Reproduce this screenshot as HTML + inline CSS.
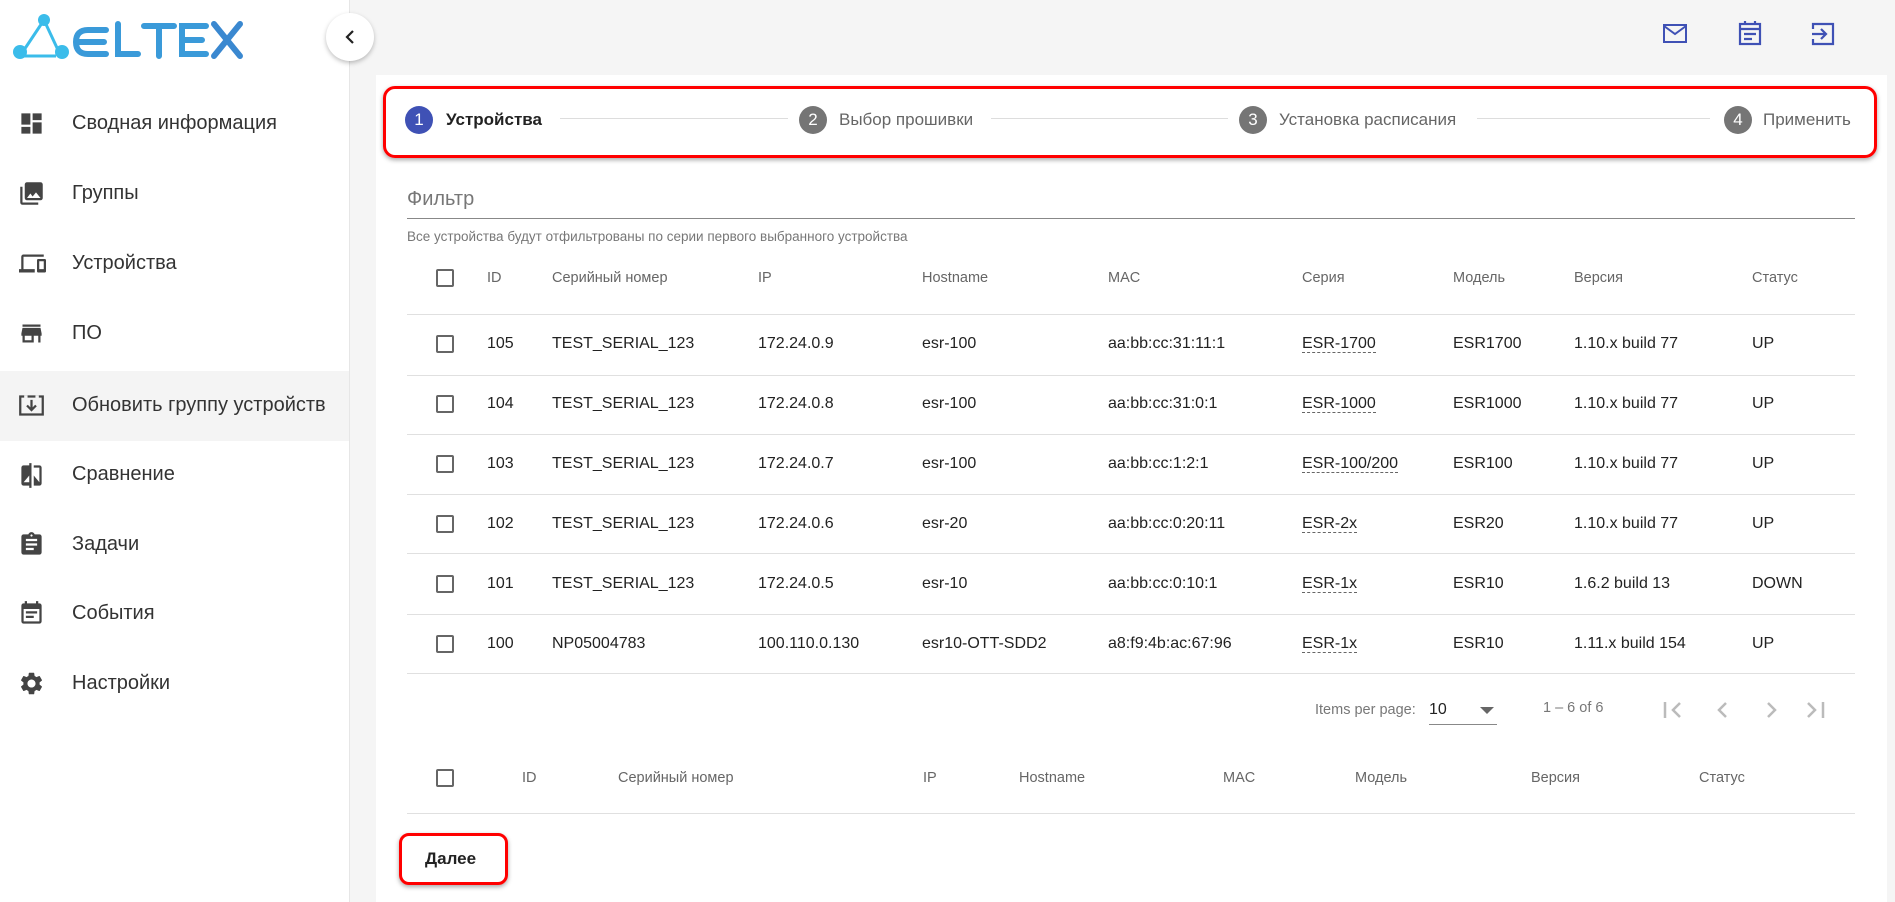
<!DOCTYPE html>
<html><head><meta charset="utf-8"><style>
*{margin:0;padding:0;box-sizing:border-box}
body{width:1895px;height:902px;overflow:hidden;background:#f5f5f5;font-family:"Liberation Sans",sans-serif;position:relative;color:#333}
.abs{position:absolute;white-space:nowrap}
#side{position:absolute;left:0;top:0;width:350px;height:902px;background:#fff;border-right:1px solid #e6e6e6}
.mi{position:absolute;left:0;width:349px;height:70px}
.mi svg{position:absolute;left:18px;top:21px}
.mi span{position:absolute;left:72px;top:23px;font-size:20px;color:#333}
#card{position:absolute;left:376px;top:75px;width:1511px;height:827px;background:#fff}
.n{font-family:"Liberation Sans Narrow","Liberation Sans",sans-serif}
.h{font-size:14.5px;color:#666}
.c{font-size:16px;color:#222}
.line{position:absolute;left:407px;width:1448px;height:1px;background:#e0e0e0}
.cb{position:absolute;left:436px;width:18px;height:18px;border:2px solid #666;border-radius:2px}
.ser{border-bottom:1px dashed #666}
.step{position:absolute;width:28px;height:28px;border-radius:50%;background:#757575;color:#fff;font-size:17px;text-align:center;line-height:28px}
.sl{position:absolute;height:1px;background:#ddd;top:118px}
</style></head><body>
<div id="side">
<svg class="abs" style="left:10px;top:12px" width="235" height="50" viewBox="0 0 235 50">
<g fill="#3bbcea"><circle cx="34" cy="8" r="6"/><circle cx="10" cy="40" r="7"/><circle cx="52" cy="40" r="7"/></g>
<g stroke="#3bbcea" stroke-width="3" fill="none"><path d="M34 8 L14 38 M34 8 L48 38 M14 44 H46"/></g>
<g stroke="#3a9ad9" stroke-width="6" fill="none" stroke-linecap="round"><path d="M96 18 H78 Q66 18 66 30 Q66 42 78 42 H96 M68 30 H94"/><path d="M108 12 V42 H128"/><path d="M134 14 H164 M149 14 V44"/><path d="M196 14 H172 V42 H196 M172 28 H192"/></g>
<path d="M204 12 L230 44 M230 12 L204 44" stroke="#3a88d0" stroke-width="6" stroke-linecap="round" fill="none"/>
</svg>
<div class="mi" style="top:89px"><svg width="27" height="27" viewBox="0 0 24 24" fill="#444"><path d="M3 13h8V3H3v10zm0 8h8v-6H3v6zm10 0h8V11h-8v10zm0-18v6h8V3h-8z"/></svg><span>Сводная информация</span></div>
<div class="mi" style="top:159px"><svg width="27" height="27" viewBox="0 0 24 24" fill="#444"><path d="M22 16V4c0-1.1-.9-2-2-2H8c-1.1 0-2 .9-2 2v12c0 1.1.9 2 2 2h12c1.1 0 2-.9 2-2zm-11-4l2 2.7L16 11l4 5H8l3-4zM2 6v14c0 1.1.9 2 2 2h14v-2H4V6H2z"/></svg><span>Группы</span></div>
<div class="mi" style="top:229px"><svg width="29" height="27" viewBox="0 0 24 24" fill="#444"><path d="M4 6h18V4H4c-1.1 0-2 .9-2 2v11H0v3h14v-3H4V6zm19 2h-6c-.55 0-1 .45-1 1v10c0 .55.45 1 1 1h6c.55 0 1-.45 1-1V9c0-.55-.45-1-1-1zm-1 9h-4v-7h4v7z"/></svg><span>Устройства</span></div>
<div class="mi" style="top:299px"><svg width="27" height="27" viewBox="0 0 24 24" fill="#444"><path d="M20 4H4v2h16V4zm1 10v-2l-1-5H4l-1 5v2h1v6h10v-6h4v6h2v-6h1zm-9 4H6v-4h6v4z"/></svg><span>ПО</span></div>
<div class="mi" style="top:371px;background:#f4f4f4"><svg width="27" height="27" viewBox="0 0 24 24" fill="none" stroke="#444" stroke-width="2"><rect x="2" y="4" width="20" height="16"/><path d="M12 7v9M8 12l4 4 4-4"/><path d="M7 3v3M17 3v3" stroke="#f4f4f4" stroke-width="3"/></svg><span>Обновить группу устройств</span></div>
<div class="mi" style="top:440px"><svg width="27" height="29" viewBox="0 0 24 24" fill="#444"><path d="M10 3H5c-1.1 0-2 .9-2 2v14c0 1.1.9 2 2 2h5v2h2V1h-2v2zm0 15H5l5-6v6zm9-15h-5v2h5v13l-5-6v9h5c1.1 0 2-.9 2-2V5c0-1.1-.9-2-2-2z"/></svg><span>Сравнение</span></div>
<div class="mi" style="top:510px"><svg width="27" height="27" viewBox="0 0 24 24" fill="#444"><path d="M19 3h-4.18C14.4 1.84 13.3 1 12 1s-2.4.84-2.820 2H5c-1.1 0-2 .9-2 2v14c0 1.1.9 2 2 2h14c1.1 0 2-.9 2-2V5c0-1.1-.9-2-2-2zm-7 0c.55 0 1 .45 1 1s-.45 1-1 1-1-.45-1-1 .45-1 1-1zm2 14H7v-2h7v2zm3-4H7v-2h10v2zm0-4H7V7h10v2z"/></svg><span>Задачи</span></div>
<div class="mi" style="top:579px"><svg width="27" height="27" viewBox="0 0 24 24" fill="#444"><path d="M17 10H7v2h10v-2zm2-7h-1V1h-2v2H8V1H6v2H5c-1.11 0-2 .9-2 2v14c0 1.1.89 2 2 2h14c1.1 0 2-.9 2-2V5c0-1.1-.9-2-2-2zm0 16H5V8h14v11zm-5-5H7v2h7v-2z"/></svg><span>События</span></div>
<div class="mi" style="top:649px"><svg width="27" height="27" viewBox="0 0 24 24" fill="#444"><path d="M19.14 12.94c.04-.3.06-.61.06-.94 0-.32-.02-.64-.07-.94l2.03-1.58a.49.49 0 00.12-.61l-1.92-3.32a.488.488 0 00-.59-.22l-2.39.96c-.5-.38-1.030-.7-1.62-.94l-.36-2.54a.484.484 0 00-.48-.41h-3.84c-.24 0-.43.17-.47.41l-.36 2.54c-.59.24-1.13.57-1.62.94l-2.39-.96c-.22-.08-.47 0-.59.22L2.74 8.87c-.12.21-.08.47.12.61l2.03 1.58c-.05.3-.09.63-.09.94s.02.64.07.94l-2.03 1.58a.49.49 0 00-.12.61l1.92 3.32c.12.22.37.29.59.22l2.39-.96c.5.38 1.03.7 1.62.94l.36 2.54c.05.24.24.41.48.41h3.84c.24 0 .44-.17.47-.41l.36-2.54c.59-.24 1.13-.56 1.62-.94l2.39.96c.22.08.47 0 .59-.22l1.92-3.32c.12-.22.07-.47-.12-.61l-2.01-1.58zM12 15.6c-1.98 0-3.6-1.62-3.6-3.6s1.62-3.6 3.6-3.6 3.6 1.62 3.6 3.6-1.62 3.6-3.6 3.6z"/></svg><span>Настройки</span></div>
</div>
<div class="abs" style="left:326px;top:13px;width:48px;height:48px;border-radius:50%;background:#fff;box-shadow:0 2px 5px rgba(0,0,0,.25)"><svg style="position:absolute;left:14px;top:14px" width="20" height="20" viewBox="0 0 20 20"><path d="M13 4L7 10l6 6" stroke="#222" stroke-width="2.2" fill="none"/></svg></div>
<svg class="abs" style="left:1663px;top:24px" width="24" height="20" viewBox="0 0 24 20" fill="none" stroke="#3f51b5" stroke-width="2"><rect x="1" y="1" width="22" height="17"/><path d="M1 2l11 8 11-8"/></svg>
<svg class="abs" style="left:1738px;top:20px" width="24" height="26" viewBox="0 0 24 26" fill="none" stroke="#3f51b5" stroke-width="2.2"><rect x="2" y="4" width="20" height="20"/><path d="M2 9h20M7 1v4M17 1v4M6 14h12M6 19h8"/></svg>
<svg class="abs" style="left:1811px;top:22px" width="24" height="24" viewBox="0 0 24 24" fill="none" stroke="#3f51b5" stroke-width="2.2"><path d="M2 7V2h20v20H2v-5"/><path d="M1 12h13M10 7l5 5-5 5"/></svg>
<div id="card"></div>
<div class="abs" style="left:383px;top:86px;width:1494px;height:72px;border:3px solid #f00;border-radius:12px;box-shadow:0 2px 5px rgba(0,0,0,.35)"></div>
<div class="step" style="left:405px;top:106px;background:#3f51b5">1</div>
<div class="abs n" style="left:446px;top:110px;font-size:17px;color:#222;font-weight:bold">Устройства</div>
<div class="sl" style="left:560px;width:228px"></div>
<div class="step" style="left:799px;top:106px">2</div>
<div class="abs n" style="left:839px;top:110px;font-size:17px;color:#666">Выбор прошивки</div>
<div class="sl" style="left:991px;width:237px"></div>
<div class="step" style="left:1239px;top:106px">3</div>
<div class="abs n" style="left:1279px;top:110px;font-size:17px;color:#666">Установка расписания</div>
<div class="sl" style="left:1477px;width:233px"></div>
<div class="step" style="left:1724px;top:106px">4</div>
<div class="abs n" style="left:1763px;top:110px;font-size:17px;color:#666">Применить</div>
<div class="abs n" style="left:407px;top:188px;font-size:20px;color:#777">Фильтр</div>
<div class="abs" style="left:407px;top:218px;width:1448px;height:1px;background:#888"></div>
<div class="abs n" style="left:407px;top:229px;font-size:13.5px;color:#777">Все устройства будут отфильтрованы по серии первого выбранного устройства</div>
<div class="cb" style="top:269px"></div>
<div class="abs n h" style="left:487px;top:270px">ID</div><div class="abs n h" style="left:552px;top:270px">Серийный номер</div><div class="abs n h" style="left:758px;top:270px">IP</div><div class="abs n h" style="left:922px;top:270px">Hostname</div><div class="abs n h" style="left:1108px;top:270px">MAC</div><div class="abs n h" style="left:1302px;top:270px">Серия</div><div class="abs n h" style="left:1453px;top:270px">Модель</div><div class="abs n h" style="left:1574px;top:270px">Версия</div><div class="abs n h" style="left:1752px;top:270px">Статус</div>
<div class="line" style="top:314px"></div>
<div class="cb" style="top:335px"></div><div class="abs n c" style="left:487px;top:335px">105</div><div class="abs n c" style="left:552px;top:335px">TEST_SERIAL_123</div><div class="abs n c" style="left:758px;top:335px">172.24.0.9</div><div class="abs n c" style="left:922px;top:335px">esr-100</div><div class="abs n c" style="left:1108px;top:335px">aa:bb:cc:31:11:1</div><div class="abs n c" style="left:1302px;top:335px"><span class="ser">ESR-1700</span></div><div class="abs n c" style="left:1453px;top:335px">ESR1700</div><div class="abs n c" style="left:1574px;top:335px">1.10.x build 77</div><div class="abs n c" style="left:1752px;top:335px">UP</div>
<div class="line" style="top:375px"></div>
<div class="cb" style="top:395px"></div><div class="abs n c" style="left:487px;top:395px">104</div><div class="abs n c" style="left:552px;top:395px">TEST_SERIAL_123</div><div class="abs n c" style="left:758px;top:395px">172.24.0.8</div><div class="abs n c" style="left:922px;top:395px">esr-100</div><div class="abs n c" style="left:1108px;top:395px">aa:bb:cc:31:0:1</div><div class="abs n c" style="left:1302px;top:395px"><span class="ser">ESR-1000</span></div><div class="abs n c" style="left:1453px;top:395px">ESR1000</div><div class="abs n c" style="left:1574px;top:395px">1.10.x build 77</div><div class="abs n c" style="left:1752px;top:395px">UP</div>
<div class="line" style="top:434px"></div>
<div class="cb" style="top:455px"></div><div class="abs n c" style="left:487px;top:455px">103</div><div class="abs n c" style="left:552px;top:455px">TEST_SERIAL_123</div><div class="abs n c" style="left:758px;top:455px">172.24.0.7</div><div class="abs n c" style="left:922px;top:455px">esr-100</div><div class="abs n c" style="left:1108px;top:455px">aa:bb:cc:1:2:1</div><div class="abs n c" style="left:1302px;top:455px"><span class="ser">ESR-100/200</span></div><div class="abs n c" style="left:1453px;top:455px">ESR100</div><div class="abs n c" style="left:1574px;top:455px">1.10.x build 77</div><div class="abs n c" style="left:1752px;top:455px">UP</div>
<div class="line" style="top:494px"></div>
<div class="cb" style="top:515px"></div><div class="abs n c" style="left:487px;top:515px">102</div><div class="abs n c" style="left:552px;top:515px">TEST_SERIAL_123</div><div class="abs n c" style="left:758px;top:515px">172.24.0.6</div><div class="abs n c" style="left:922px;top:515px">esr-20</div><div class="abs n c" style="left:1108px;top:515px">aa:bb:cc:0:20:11</div><div class="abs n c" style="left:1302px;top:515px"><span class="ser">ESR-2x</span></div><div class="abs n c" style="left:1453px;top:515px">ESR20</div><div class="abs n c" style="left:1574px;top:515px">1.10.x build 77</div><div class="abs n c" style="left:1752px;top:515px">UP</div>
<div class="line" style="top:553px"></div>
<div class="cb" style="top:575px"></div><div class="abs n c" style="left:487px;top:575px">101</div><div class="abs n c" style="left:552px;top:575px">TEST_SERIAL_123</div><div class="abs n c" style="left:758px;top:575px">172.24.0.5</div><div class="abs n c" style="left:922px;top:575px">esr-10</div><div class="abs n c" style="left:1108px;top:575px">aa:bb:cc:0:10:1</div><div class="abs n c" style="left:1302px;top:575px"><span class="ser">ESR-1x</span></div><div class="abs n c" style="left:1453px;top:575px">ESR10</div><div class="abs n c" style="left:1574px;top:575px">1.6.2 build 13</div><div class="abs n c" style="left:1752px;top:575px">DOWN</div>
<div class="line" style="top:614px"></div>
<div class="cb" style="top:635px"></div><div class="abs n c" style="left:487px;top:635px">100</div><div class="abs n c" style="left:552px;top:635px">NP05004783</div><div class="abs n c" style="left:758px;top:635px">100.110.0.130</div><div class="abs n c" style="left:922px;top:635px">esr10-OTT-SDD2</div><div class="abs n c" style="left:1108px;top:635px">a8:f9:4b:ac:67:96</div><div class="abs n c" style="left:1302px;top:635px"><span class="ser">ESR-1x</span></div><div class="abs n c" style="left:1453px;top:635px">ESR10</div><div class="abs n c" style="left:1574px;top:635px">1.11.x build 154</div><div class="abs n c" style="left:1752px;top:635px">UP</div>
<div class="line" style="top:673px"></div>
<div class="abs n" style="left:1315px;top:702px;font-size:14.5px;color:#777">Items per page:</div>
<div class="abs n" style="left:1429px;top:701px;font-size:16px;color:#222">10</div>
<div class="abs" style="left:1480px;top:707px;width:0;height:0;border-left:7px solid transparent;border-right:7px solid transparent;border-top:7px solid #666"></div>
<div class="abs" style="left:1429px;top:724px;width:68px;height:1px;background:#888"></div>
<div class="abs n" style="left:1543px;top:700px;font-size:14.5px;color:#777">1 – 6 of 6</div>
<svg class="abs" style="left:1660px;top:698px" width="175" height="24" viewBox="0 0 175 24" fill="none" stroke="#bbb" stroke-width="2.5"><path d="M5 4v16M20 5l-7 7 7 7"/><path d="M66 5l-7 7 7 7"/><path d="M108 5l7 7-7 7"/><path d="M148 5l7 7-7 7M163 4v16"/></svg>
<div class="cb" style="top:769px"></div>
<div class="abs n h" style="left:522px;top:770px">ID</div><div class="abs n h" style="left:618px;top:770px">Серийный номер</div><div class="abs n h" style="left:923px;top:770px">IP</div><div class="abs n h" style="left:1019px;top:770px">Hostname</div><div class="abs n h" style="left:1223px;top:770px">MAC</div><div class="abs n h" style="left:1355px;top:770px">Модель</div><div class="abs n h" style="left:1531px;top:770px">Версия</div><div class="abs n h" style="left:1699px;top:770px">Статус</div>
<div class="line" style="top:813px"></div>
<div class="abs" style="left:399px;top:833px;width:109px;height:52px;border:3px solid #f00;border-radius:10px;box-shadow:0 2px 5px rgba(0,0,0,.35)"></div>
<div class="abs n" style="left:425px;top:849px;font-size:17px;color:#222;font-weight:bold">Далее</div>
</body></html>
